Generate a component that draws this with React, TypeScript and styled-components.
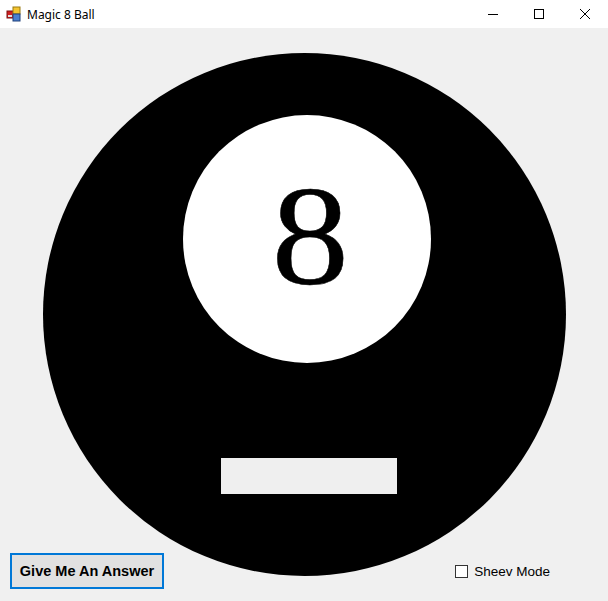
import React from "react";
import styled, { createGlobalStyle } from "styled-components";

const Global = createGlobalStyle`
  html, body { margin: 0; padding: 0; background: #f0f0f0; }
  body { width: 608px; height: 601px; overflow: hidden; }
`;

const Window = styled.div`
  width: 608px;
  height: 601px;
  display: flex;
  flex-direction: column;
  background: #f0f0f0;
`;

const TitleBar = styled.div`
  height: 28px;
  flex: none;
  background: #ffffff;
  display: flex;
  align-items: center;
`;

const AppIcon = styled.svg`
  width: 16px;
  height: 16px;
  margin-left: 6px;
  flex: none;
`;

const Title = styled.span`
  margin-left: 5px;
  font-family: "Noto Sans", "Open Sans", sans-serif;
  font-size: 12px;
  color: #000;
  flex: 1;
`;

const Controls = styled.div`
  display: flex;
  height: 100%;
`;

const ControlButton = styled.div`
  width: 46px;
  height: 100%;
  display: flex;
  align-items: center;
  justify-content: center;
`;

const Body = styled.div`
  flex: 1;
  display: grid;
  grid-template: 1fr / 1fr;
`;

const Ball = styled.div`
  grid-area: 1 / 1;
  align-self: start;
  justify-self: start;
  margin: 25px 0 0 43px;
  width: 523px;
  height: 523px;
  border-radius: 50%;
  background: #000;
  display: flex;
  flex-direction: column;
  align-items: center;
`;

const Face = styled.div`
  width: 248px;
  height: 248px;
  margin-top: 62px;
  margin-left: 5px;
  border-radius: 50%;
  background: #fff;
  display: flex;
  align-items: center;
  justify-content: center;
`;

const Number = styled.span`
  font-family: "Liberation Serif", "Times New Roman", serif;
  font-size: 141px;
  line-height: 1;
  color: #000;
  margin-left: 6px;
  margin-top: -5px;
  display: inline-block;
  transform: scaleX(1.1);
  -webkit-text-stroke: 0.5px #000;
`;

const AnswerBox = styled.div`
  width: 176px;
  height: 36px;
  margin-top: 95px;
  margin-left: 9px;
  background: #efefef;
`;

const BottomRow = styled.div`
  grid-area: 1 / 1;
  align-self: end;
  display: flex;
  align-items: center;
  justify-content: space-between;
  margin: 0 0 12px 10px;
`;

const AnswerButton = styled.button`
  width: 154px;
  height: 36px;
  box-sizing: border-box;
  border: 2px solid #0078d7;
  background: #e1e1e1;
  font-family: "Liberation Sans", Arial, sans-serif;
  font-weight: bold;
  font-size: 14.5px;
  color: #000;
  padding: 0;
  margin: 0;
`;

const CheckLabel = styled.label`
  display: flex;
  align-items: center;
  margin-right: 58px;
  font-family: "Liberation Sans", Arial, sans-serif;
  font-size: 13.5px;
  color: #000;
`;

const Box = styled.span`
  width: 13px;
  height: 13px;
  box-sizing: border-box;
  border: 1px solid #333;
  background: #fff;
  margin-right: 6px;
`;

export default function App() {
  return (
    <Window>
      <Global />
      <TitleBar>
        <AppIcon viewBox="0 0 16 16">
          <rect x="1" y="5" width="7" height="7" fill="#d02020" stroke="#7a1010" strokeWidth="1" />
          <rect x="7" y="1" width="7" height="7" fill="#f4c430" stroke="#9a7a10" strokeWidth="1" />
          <rect x="7" y="8" width="7" height="7" fill="#4a7fd0" stroke="#20407a" strokeWidth="1" />
          <rect x="2" y="9" width="4" height="2" fill="#e0e0e0" />
        </AppIcon>
        <Title>Magic 8 Ball</Title>
        <Controls>
          <ControlButton>
            <svg width="10" height="10" viewBox="0 0 10 10">
              <line x1="0" y1="5.5" x2="10" y2="5.5" stroke="#000" strokeWidth="1" />
            </svg>
          </ControlButton>
          <ControlButton>
            <svg width="10" height="10" viewBox="0 0 10 10">
              <rect x="0.5" y="0.5" width="9" height="9" fill="none" stroke="#000" strokeWidth="1" />
            </svg>
          </ControlButton>
          <ControlButton>
            <svg width="10" height="10" viewBox="0 0 10 10">
              <path d="M0 0 L10 10 M10 0 L0 10" stroke="#000" strokeWidth="1" />
            </svg>
          </ControlButton>
        </Controls>
      </TitleBar>
      <Body>
        <Ball>
          <Face>
            <Number>8</Number>
          </Face>
          <AnswerBox />
        </Ball>
        <BottomRow>
          <AnswerButton>Give Me An Answer</AnswerButton>
          <CheckLabel>
            <Box />
            Sheev Mode
          </CheckLabel>
        </BottomRow>
      </Body>
    </Window>
  );
}
